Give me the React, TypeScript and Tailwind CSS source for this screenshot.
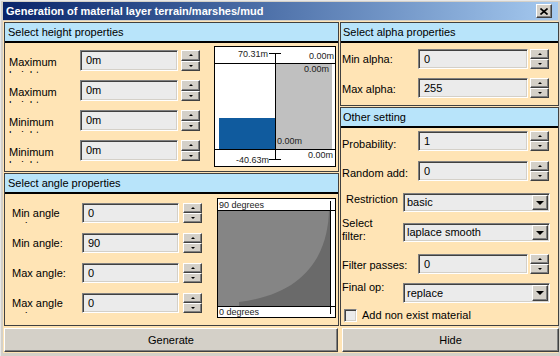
import React from "react";

const raised =
  "bg-[#d4d0c8] border border-t-white border-l-white border-r-[#404040] border-b-[#404040] shadow-[inset_-1px_-1px_0_#808080]";
const sunken =
  "bg-[#ebebeb] border border-t-[#808080] border-l-[#808080] border-r-white border-b-white shadow-[inset_1px_1px_0_#404040,inset_-1px_-1px_0_#d4d0c8]";

function Spin() {
  return (
    <div className="flex flex-col w-[19px] h-full shrink-0">
      <div className={`${raised} flex-1 flex items-center justify-center`}>
        <div className="w-0 h-0 border-x-[2px] border-x-transparent border-b-[2px] border-b-black" />
      </div>
      <div className={`${raised} flex-1 flex items-center justify-center`}>
        <div className="w-0 h-0 border-x-[2px] border-x-transparent border-t-[2px] border-t-black" />
      </div>
    </div>
  );
}

function SelectBox({ value, cls }: { value: string; cls: string }) {
  return (
    <div className={`${sunken} ${cls} flex items-center p-[1px] shrink-0`}>
      <span className="flex-1 pl-[2px]">{value}</span>
      <div className={`${raised} w-[16px] h-full flex items-center justify-center`}>
        <div className="w-0 h-0 border-x-[4px] border-x-transparent border-t-[4px] border-t-black" />
      </div>
    </div>
  );
}

function Header({ text, pl }: { text: string; pl: string }) {
  return (
    <div className={`h-[20px] shrink-0 bg-[#b8e4fa] border-b-2 border-black flex items-center ${pl}`}>
      {text}
    </div>
  );
}

const panel = "border border-[#404040] bg-[#ffe4b5] flex flex-col overflow-hidden";

function HeightRow({ label }: { label: string }) {
  return (
    <div className="flex h-[21px] items-start">
      <div className="w-[71px] h-[17px] mt-[6px] overflow-hidden leading-[13px] shrink-0">
        {label} height
      </div>
      <div className={`${sunken} w-[98px] h-full flex items-center pl-[5px] shrink-0`}>0m</div>
      <div className="ml-[3px] h-full">
        <Spin />
      </div>
    </div>
  );
}

function AngleRow({ label, value, dot }: { label: string; value: string; dot?: boolean }) {
  return (
    <div className="flex h-[20px] items-start">
      <div className="w-[70px] h-[17px] mt-[4px] overflow-hidden leading-[13px] shrink-0">
        {label}
        {dot && (
          <>
            <br />
            <span className="pl-[13px]">i</span>
          </>
        )}
      </div>
      <div className={`${sunken} w-[97px] h-full flex items-center pl-[5px] shrink-0`}>{value}</div>
      <div className="ml-[4px] h-full">
        <Spin />
      </div>
    </div>
  );
}

function NumRow({ label, value, lmt, cls }: { label: string; value: string; lmt: string; cls: string }) {
  return (
    <div className={`flex h-[20px] items-start pl-[1px] ${cls}`}>
      <div className={`w-[76px] leading-[13px] shrink-0 ${lmt}`}>{label}</div>
      <div className={`${sunken} w-[110px] h-full flex items-center pl-[5px] shrink-0`}>{value}</div>
      <div className="ml-[2px] h-full">
        <Spin />
      </div>
    </div>
  );
}

function HeightChart() {
  return (
    <div className="w-[122px] h-[121px] border border-black bg-white ml-auto mr-[2px] shrink-0 self-start">
      <svg width="120" height="119" className="block" fontFamily="Liberation Sans, Arial, sans-serif" fontSize="9">
        <rect x="60" y="16" width="57" height="87" fill="#c0c0c0" />
        <rect x="4" y="71" width="56" height="32" fill="#105b9e" />
        <g stroke="#000" strokeWidth="1" shapeRendering="crispEdges">
          <line x1="0" y1="16.5" x2="120" y2="16.5" />
          <line x1="0" y1="102.5" x2="120" y2="102.5" />
          <line x1="60.5" y1="6" x2="60.5" y2="113" />
          <line x1="54" y1="6.5" x2="66" y2="6.5" />
          <line x1="54" y1="112.5" x2="66" y2="112.5" />
        </g>
        <g fill="#222">
          <text x="53" y="10" textAnchor="end">70.31m</text>
          <text x="119" y="12" textAnchor="end">0.00m</text>
          <text x="114" y="25" textAnchor="end">0.00m</text>
          <text x="62" y="97">0.00m</text>
          <text x="54" y="116" textAnchor="end">-40.63m</text>
          <text x="118" y="111" textAnchor="end">0.00m</text>
        </g>
      </svg>
    </div>
  );
}

function AngleChart() {
  return (
    <div className="w-[119px] h-[120px] border border-black bg-white ml-auto mr-[2px] shrink-0 self-start">
      <svg width="117" height="118" className="block" fontFamily="Liberation Sans, Arial, sans-serif" fontSize="9">
        <rect x="0" y="11" width="112" height="96" fill="#6a6a6a" />
        <path d="M0,11 L111,11 C110,55 88,95 21,103 L21,107 L0,107 Z" fill="#858585" />
        <g stroke="#000" strokeWidth="1" shapeRendering="crispEdges">
          <line x1="0" y1="11.5" x2="117" y2="11.5" />
          <line x1="0" y1="107.5" x2="117" y2="107.5" />
          <line x1="112.5" y1="2" x2="112.5" y2="115" />
        </g>
        <g fill="#222">
          <text x="1" y="9">90 degrees</text>
          <text x="1" y="116">0 degrees</text>
        </g>
      </svg>
    </div>
  );
}

export default function App() {
  return (
    <div className="w-[560px] h-[356px] bg-[#d4d0c8] flex flex-col pt-[1px] px-[2px] pb-[3px] font-['Liberation_Sans',Arial,sans-serif] text-[11px] text-black leading-[13px] overflow-hidden border-t border-l border-t-[#e8e8e8] border-l-[#e8e8e8]">
      {/* title bar */}
      <div className="h-[18px] shrink-0 flex items-center bg-linear-to-r from-[#0a246a] to-[#a6caf0] pl-[3px]">
        <span className="text-white font-bold text-[11px]">Generation of material layer terrain/marshes/mud</span>
        <div className={`ml-auto mr-[6px] w-[16px] h-[14px] ${raised} flex items-center justify-center`}>
          <svg width="8" height="7" viewBox="0 0 8 7">
            <path d="M0.5,0.5 L7.5,6.5 M7.5,0.5 L0.5,6.5" stroke="#000" strokeWidth="1.6" />
          </svg>
        </div>
      </div>

      {/* body */}
      <div className="mt-[1px] flex-1 bg-[#ffe4b5] flex gap-[1px] pl-[1px] pt-[1px]">
        {/* left column */}
        <div className="w-[335px] flex flex-col shrink-0">
          <div className={`${panel} h-[150px]`}>
            <Header text="Select height properties" pl="pl-[3px]" />
            <div className="flex pt-[3px] pl-[4px]">
              <div className="flex flex-col gap-[9px] mt-[4px]">
                <HeightRow label="Maximum" />
                <HeightRow label="Maximum" />
                <HeightRow label="Minimum" />
                <HeightRow label="Minimum" />
              </div>
              <HeightChart />
            </div>
          </div>

          <div className={`${panel} h-[153px] mt-[1px]`}>
            <Header text="Select angle properties" pl="pl-[3px]" />
            <div className="flex pt-[4px] pl-[7px]">
              <div className="flex flex-col gap-[10px] mt-[5px]">
                <AngleRow label="Min angle" value="0" dot />
                <AngleRow label="Min angle:" value="90" />
                <AngleRow label="Max angle:" value="0" />
                <AngleRow label="Max angle" value="0" dot />
              </div>
              <AngleChart />
            </div>
          </div>

          <div className={`${raised} mt-[2px] h-[24px] w-[334px] flex items-center justify-center`}>Generate</div>
        </div>

        {/* right column */}
        <div className="w-[219px] flex flex-col shrink-0">
          <div className={`${panel} h-[84px]`}>
            <Header text="Select alpha properties" pl="pl-[2px]" />
            <div className="flex flex-col pt-[6px]">
              <NumRow label="Min alpha:" value="0" lmt="mt-[4px]" cls="" />
              <NumRow label="Max alpha:" value="255" lmt="mt-[5px]" cls="mt-[9px]" />
            </div>
          </div>

          <div className={`${panel} h-[219px] mt-[1px]`}>
            <Header text="Other setting" pl="pl-[2px]" />
            <div className="flex flex-col pt-[3px]">
              <NumRow label="Probability:" value="1" lmt="mt-[7px]" cls="" />
              <NumRow label="Random add:" value="0" lmt="mt-[6px]" cls="mt-[10px]" />

              <div className="flex h-[19px] items-start pl-[1px] mt-[12px]">
                <div className="w-[61px] pl-[4px] leading-[13px] shrink-0">Restriction</div>
                <SelectBox value="basic" cls="w-[147px] h-full" />
              </div>

              <div className="flex h-[19px] items-start pl-[1px] mt-[11px]">
                <div className="w-[61px] leading-[13px] mt-[-6px] shrink-0">
                  Select
                  <br />
                  filter:
                </div>
                <SelectBox value="laplace smooth" cls="w-[147px] h-full" />
              </div>

              <NumRow label="Filter passes:" value="0" lmt="mt-[5px]" cls="mt-[12px]" />

              <div className="flex h-[20px] items-start pl-[1px] mt-[9px]">
                <div className="w-[61px] leading-[13px] mt-[-2px] shrink-0">Final op:</div>
                <SelectBox value="replace" cls="w-[147px] h-full" />
              </div>

              <div className="flex items-center h-[13px] mt-[6px] pl-[3px]">
                <div className={`${sunken} w-[13px] h-[13px] shrink-0`} />
                <span className="ml-[5px]">Add non exist material</span>
              </div>
            </div>
          </div>

          <div className={`${raised} mt-[2px] h-[24px] ml-[2px] w-[217px] flex items-center justify-center`}>Hide</div>
        </div>
      </div>
    </div>
  );
}
